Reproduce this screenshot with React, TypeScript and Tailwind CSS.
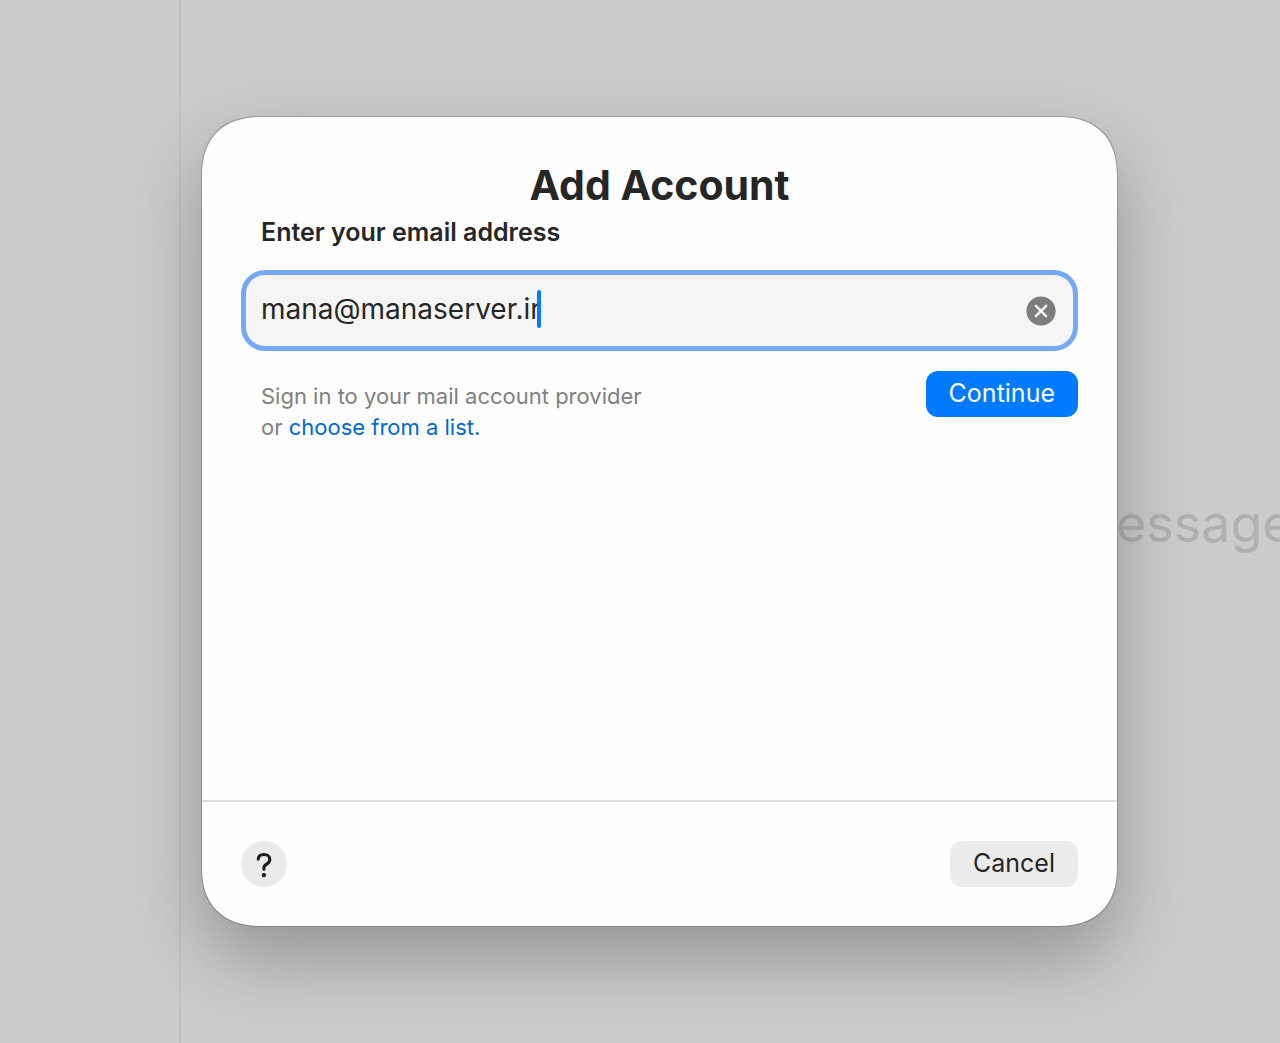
import { useState } from 'react';
import type { FormEvent } from 'react';

function ClearIcon() {
  return (
    <svg viewBox="0 0 30 30" className="w-[30px] h-[30px]" aria-hidden="true">
      <circle cx="15" cy="15" r="14.6" fill="#7d7d7d" />
      <path d="M9.9 9.9 20.1 20.1M20.1 9.9 9.9 20.1" stroke="#f7f7f7" strokeWidth="2.6" strokeLinecap="round" />
    </svg>
  );
}

function HelpIcon() {
  return (
    <svg viewBox="0 0 46 46" className="w-[46px] h-[46px]" fill="none" aria-hidden="true">
      <path
        d="M17.2 18.2C17.4 15.4 19.6 13.5 23 13.5C26.4 13.5 28.8 15.5 28.8 18.5C28.8 20.7 27.7 22 25.7 23.2C23.6 24.4 22.9 25.3 22.9 27V28.2"
        stroke="#1d1d1d"
        strokeWidth="3.1"
        strokeLinecap="round"
        strokeLinejoin="round"
      />
      <circle cx="22.9" cy="34.1" r="2.2" fill="#1d1d1d" />
    </svg>
  );
}

function Backdrop() {
  return (
    <div className="absolute inset-0 flex overflow-hidden">
      <aside className="w-[181px] shrink-0 border-r-2 border-[#c0c0c0]" />
      <section className="flex flex-1 items-center justify-end">
        <p className="w-[164px] whitespace-nowrap pt-1 text-[52px] leading-[64px] text-[#b0b0b0]">essage</p>
      </section>
    </div>
  );
}

function AccountDialog() {
  const [email, setEmail] = useState('mana@manaserver.ir');

  const handleSubmit = (e: FormEvent) => {
    e.preventDefault();
  };

  return (
    <form
      role="dialog"
      aria-labelledby="dialog-title"
      onSubmit={handleSubmit}
      className="flex flex-1 flex-col rounded-[60px] [corner-shape:superellipse(1.25)] bg-[#fefefe] shadow-[0_0_0_1px_rgba(0,0,0,0.18),0_32px_72px_rgba(0,0,0,0.27)]"
    >
      <div className="flex flex-1 flex-col px-[39px] pt-[43px]">
        <h1 id="dialog-title" className="text-center text-[41px] leading-[50px] font-bold">
          Add Account
        </h1>
        <label htmlFor="email" className="mt-1 px-5 text-[25px] leading-[36px] font-semibold">
          Enter your email address
        </label>

        <div className="mt-5 flex h-[81px] items-center rounded-[24px] border-5 border-[#75a9f5] bg-[#f5f5f5] pr-[17px] pl-[15px]">
          <div className="flex min-w-0 flex-1 items-center pb-1">
            <input
              id="email"
              type="text"
              value={email}
              onChange={(e) => setEmail(e.target.value)}
              className="field-sizing-content h-10 max-w-full bg-transparent text-[28px] caret-transparent outline-none"
            />
            <span className="-ml-1 h-[38px] w-1 shrink-0 rounded-full bg-[#007aff]" />
          </div>
          <button type="button" aria-label="Clear" onClick={() => setEmail('')}>
            <ClearIcon />
          </button>
        </div>

        <div className="mt-5 flex items-start justify-between">
          <p className="pt-2.5 pl-5 text-[22px] leading-[31px] text-[#808080]">
            Sign in to your mail account provider
            <br />
            or{' '}
            <a href="#providers" className="text-[#0068d0]">
              choose from a list.
            </a>
          </p>
          <button type="submit" className="h-[46px] rounded-[12px] bg-[#007aff] px-[23px] text-[25px] text-white">
            Continue
          </button>
        </div>
      </div>

      <footer className="flex items-center justify-between border-t-2 border-[#dedede] p-[39px]">
        <button type="button" aria-label="Help" className="rounded-full bg-[#ebebeb]">
          <HelpIcon />
        </button>
        <button type="button" className="h-[46px] rounded-[12px] bg-[#ebebeb] px-[23px] text-[25px]">
          Cancel
        </button>
      </footer>
    </form>
  );
}

export default function App() {
  return (
    <main className="relative flex min-h-screen bg-[#cbcbcb] font-['Inter','Liberation_Sans',sans-serif] text-[#262626]">
      <Backdrop />
      <div className="relative flex flex-1 pt-[117px] pr-[163px] pb-[117px] pl-[202px]">
        <AccountDialog />
      </div>
    </main>
  );
}
